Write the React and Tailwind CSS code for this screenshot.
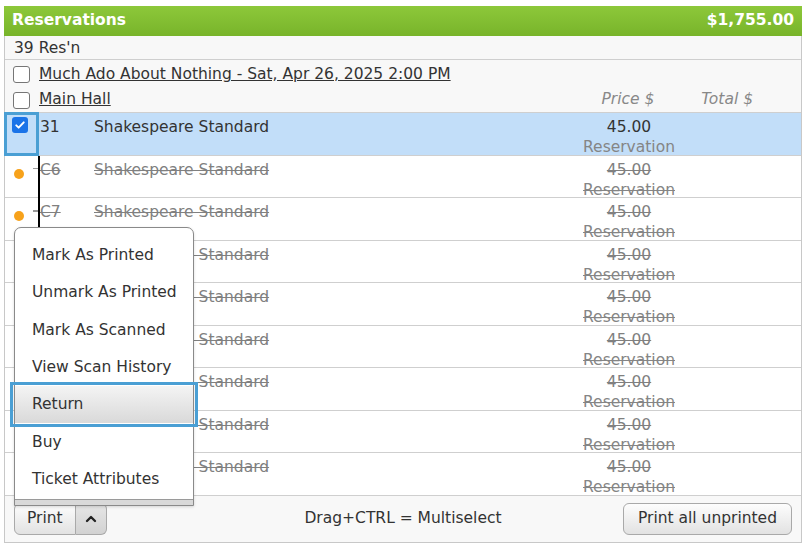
import { ChevronUp } from 'lucide-react'

/* ── Reservation rows ─────────────────────────────────────────────── */
const ROWS = [
  { id: '31', seat: 'Shakespeare Standard', price: '45.00', selected: true },
  { id: 'C6', seat: 'Shakespeare Standard', price: '45.00', struck: true, dot: true },
  { id: 'C7', seat: 'Shakespeare Standard', price: '45.00', struck: true, dot: true },
  { id: 'C8', seat: 'Shakespeare Standard', price: '45.00', struck: true, dot: true },
  { id: 'C9', seat: 'Shakespeare Standard', price: '45.00', struck: true, dot: true },
  { id: 'C10', seat: 'Shakespeare Standard', price: '45.00', struck: true, dot: true },
  { id: 'C11', seat: 'Shakespeare Standard', price: '45.00', struck: true, dot: true },
  { id: 'C12', seat: 'Shakespeare Standard', price: '45.00', struck: true, dot: true },
  { id: 'C13', seat: 'Shakespeare Standard', price: '45.00', struck: true, dot: true },
]

const MENU = [
  'Mark As Printed',
  'Unmark As Printed',
  'Mark As Scanned',
  'View Scan History',
  'Return',
  'Buy',
  'Ticket Attributes',
]

function Box({ checked }) {
  return checked ? (
    <div className="w-4 h-4 rounded-[3px] bg-[#1a73e8] flex items-center justify-center">
      <svg viewBox="0 0 16 16" className="w-3 h-3" fill="none" stroke="white" strokeWidth={2.6} strokeLinecap="round" strokeLinejoin="round">
        <path d="M3 8.5l3.2 3L13 4.5" />
      </svg>
    </div>
  ) : (
    <div className="w-[17px] h-[17px] rounded-[3px] border border-[#767676] bg-white" />
  )
}

function Row({ row }) {
  const strike = row.struck ? 'line-through text-[#808080]' : 'text-[#333]'
  return (
    <div className={`relative h-[42.5px] border-b border-[#cfcfcf] flex ${row.selected ? 'bg-[#c2def9]' : 'bg-white'}`}>
      <div className="w-[35px] shrink-0 relative">
        {row.selected && (
          <>
            <div className="absolute left-[7px] top-[4px]"><Box checked /></div>
            <div className="absolute -left-[1px] -top-[1px] w-[35px] h-[44px] border-[3px] border-[#4a9fd4]" />
          </>
        )}
        {row.dot && (
          <>
            <div className="absolute left-[9px] top-[13px] w-[10px] h-[10px] rounded-full bg-[#f7a21b]" />
            <div className="absolute left-[28px] top-[12px] w-[5px] h-[1.5px] bg-[#999]" />
          </>
        )}
      </div>
      <div className={`w-[54px] pt-[4px] leading-[21px] ${strike}`}>{row.id}</div>
      <div className={`pt-[4px] leading-[21px] ${strike}`}>{row.seat}</div>
      <div className="ml-auto mr-[112px] w-[120px] pt-[4px] flex flex-col items-center leading-[20px]">
        <span className={strike}>{row.price}</span>
        <span className={`text-[#858585] ${row.struck ? 'line-through' : ''}`}>Reservation</span>
      </div>
    </div>
  )
}

/* ── Page ─────────────────────────────────────────────────────────── */
export default function App() {
  return (
    <div className="w-[805px] h-[551px] bg-white pt-[6px] pl-[4px]" style={{ fontFamily: '"DejaVu Sans", Verdana, sans-serif' }}>
      <div className="relative w-[798px] border border-[#c8c8c8] border-t-0 text-[15.5px] text-[#333]">

        {/* ── Header ── */}
        <div className="h-[30px] -mx-px px-[8px] flex items-center justify-between bg-gradient-to-b from-[#8dc83a] to-[#78b42a] text-white font-bold text-[15.5px]">
          <span>Reservations</span>
          <span>$1,755.00</span>
        </div>

        <div className="h-[24px] px-[9px] pt-[2px] flex items-center bg-[#f8f8f8] border-b border-[#cfcfcf]">39 Res'n</div>

        <div className="bg-[#f8f8f8] border-b border-[#cfcfcf]">
          <div className="h-[27px] pl-[8px] pt-[2px] flex items-center gap-[9px]">
            <Box />
            <span className="underline">Much Ado About Nothing - Sat, Apr 26, 2025 2:00 PM</span>
          </div>
          <div className="h-[25px] pl-[8px] pt-[1px] flex items-center gap-[9px]">
            <Box />
            <span className="underline">Main Hall</span>
            <span className="ml-auto italic text-[#888]">Price $</span>
            <span className="ml-[38px] mr-[48px] italic text-[#888]">Total $</span>
          </div>
        </div>

        {/* ── Rows ── */}
        {ROWS.map(r => <Row key={r.id} row={r} />)}

        {/* ── Footer ── */}
        <div className="h-[46px] bg-[#f8f8f8] grid grid-cols-[1fr_auto_1fr] items-center px-[9px]">
          <div className="flex h-[32px]">
            <div className="px-[12px] flex items-center rounded-l-[6px] border border-[#a9a9a9] bg-gradient-to-b from-[#fdfdfd] to-[#e2e2e2]">Print</div>
            <div className="w-[31px] flex items-center justify-center rounded-r-[6px] border border-l-0 border-[#a9a9a9] bg-gradient-to-b from-[#e6e6e6] to-[#d2d2d2]">
              <ChevronUp size={16} strokeWidth={3.5} className="text-[#222]" />
            </div>
          </div>
          <div className="text-center">Drag+CTRL = Multiselect</div>
          <div className="justify-self-end h-[32px] px-[14px] flex items-center rounded-[6px] border border-[#a9a9a9] bg-gradient-to-b from-[#fdfdfd] to-[#e2e2e2]">Print all unprinted</div>
        </div>

        {/* ── Drag indicator ── */}
        <div className="absolute left-[33px] top-[150px] w-[2px] h-[78px] bg-black" />

        {/* ── Context menu ── */}
        <div className="absolute left-[9px] top-[221px] w-[180px] bg-white border border-[#8a8a8a] rounded-t-[7px] pt-[9px] shadow-[0_1px_3px_rgba(0,0,0,0.15)]">
          {MENU.map(item => (
            <div key={item} className="relative h-[37.3px] flex items-center px-[17px] whitespace-nowrap text-[#333]">
              {item === 'Return' && (
                <>
                  <div className="absolute inset-0 bg-gradient-to-b from-[#f4f4f4] to-[#d9d9d9]" />
                  <div className="absolute -left-[5px] -right-[5px] -top-[4px] -bottom-[4px] border-[3px] border-[#4a9fd4]" />
                </>
              )}
              <span className="relative">{item}</span>
            </div>
          ))}
          <div className="h-[6px] mt-[1px] bg-[#d9d9d9] border-t border-[#9a9a9a]" />
        </div>
      </div>
    </div>
  )
}
